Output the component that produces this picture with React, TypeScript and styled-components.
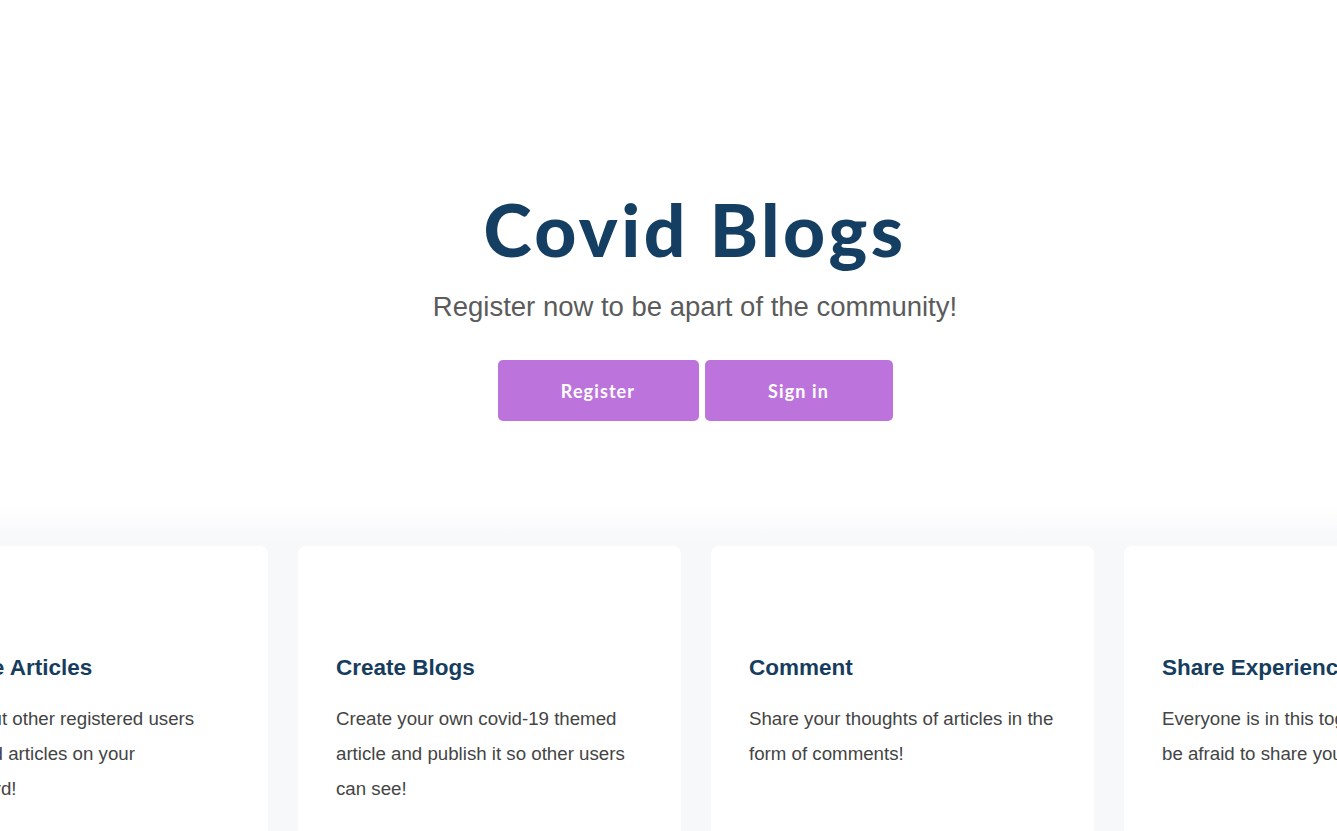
import React from "react";
import styled, { createGlobalStyle } from "styled-components";

const GlobalStyle = createGlobalStyle`
  html, body {
    margin: 0;
    padding: 0;
    background: #ffffff;
    overflow: hidden;
  }
  * { box-sizing: border-box; }
`;

const Page = styled.div`
  width: 1390px;
  min-height: 831px;
  background: #ffffff;
`;

const Hero = styled.header`
  display: flex;
  flex-direction: column;
  align-items: center;
  padding-top: 193px;
  height: 505px;
`;

const Title = styled.h1`
  margin: 0;
  font-family: "Lato", "Open Sans", sans-serif;
  font-weight: 900;
  font-size: 73px;
  line-height: 72px;
  letter-spacing: 3.5px;
  color: #143f63;
`;

const Subtitle = styled.p`
  margin: 26px 0 0;
  font-family: "Liberation Sans", Arial, sans-serif;
  font-size: 27.5px;
  line-height: 32px;
  color: #5b5b5b;
`;

const ButtonRow = styled.div`
  display: flex;
  gap: 6px;
  margin-top: 37px;
`;

const Button = styled.button<{ $w: number }>`
  width: ${(p) => p.$w}px;
  height: 61px;
  border: none;
  border-radius: 5px;
  background: #bc74dc;
  color: #ffffff;
  font-family: "Lato", "Open Sans", sans-serif;
  font-weight: 700;
  font-size: 18px;
  letter-spacing: 1.1px;
  cursor: pointer;
`;

const Features = styled.section`
  background: linear-gradient(to bottom, #ffffff 0px, #f7f8fa 36px, #f7f8fa 100%);
  padding-top: 41px;
  height: 326px;
  overflow: hidden;
`;

const Track = styled.div`
  display: flex;
  gap: 30px;
  margin-left: -115px;
`;

const Card = styled.article`
  flex: 0 0 383px;
  height: 320px;
  background: #ffffff;
  border-radius: 8px;
  padding: 109px 38px 0;
`;

const CardTitle = styled.h3`
  margin: 0;
  font-family: "Liberation Sans", Arial, sans-serif;
  font-weight: 700;
  font-size: 22.5px;
  line-height: 26px;
  color: #163d5e;
`;

const CardText = styled.p`
  margin: 20px 0 0;
  font-family: "Liberation Sans", Arial, sans-serif;
  font-size: 18.7px;
  line-height: 35px;
  color: #444444;
`;

const features = [
  {
    title: "Browse Articles",
    text: "Check out other registered users published articles on your dashboard!",
  },
  {
    title: "Create Blogs",
    text: "Create your own covid-19 themed article and publish it so other users can see!",
  },
  {
    title: "Comment",
    text: "Share your thoughts of articles in the form of comments!",
  },
  {
    title: "Share Experiences",
    text: "Everyone is in this together, so don't be afraid to share your experiences!",
  },
];

export default function App() {
  return (
    <Page>
      <GlobalStyle />
      <Hero>
        <Title>Covid Blogs</Title>
        <Subtitle>Register now to be apart of the community!</Subtitle>
        <ButtonRow>
          <Button $w={201}>Register</Button>
          <Button $w={188}>Sign in</Button>
        </ButtonRow>
      </Hero>
      <Features>
        <Track>
          {features.map((f) => (
            <Card key={f.title}>
              <CardTitle>{f.title}</CardTitle>
              <CardText>{f.text}</CardText>
            </Card>
          ))}
        </Track>
      </Features>
    </Page>
  );
}
